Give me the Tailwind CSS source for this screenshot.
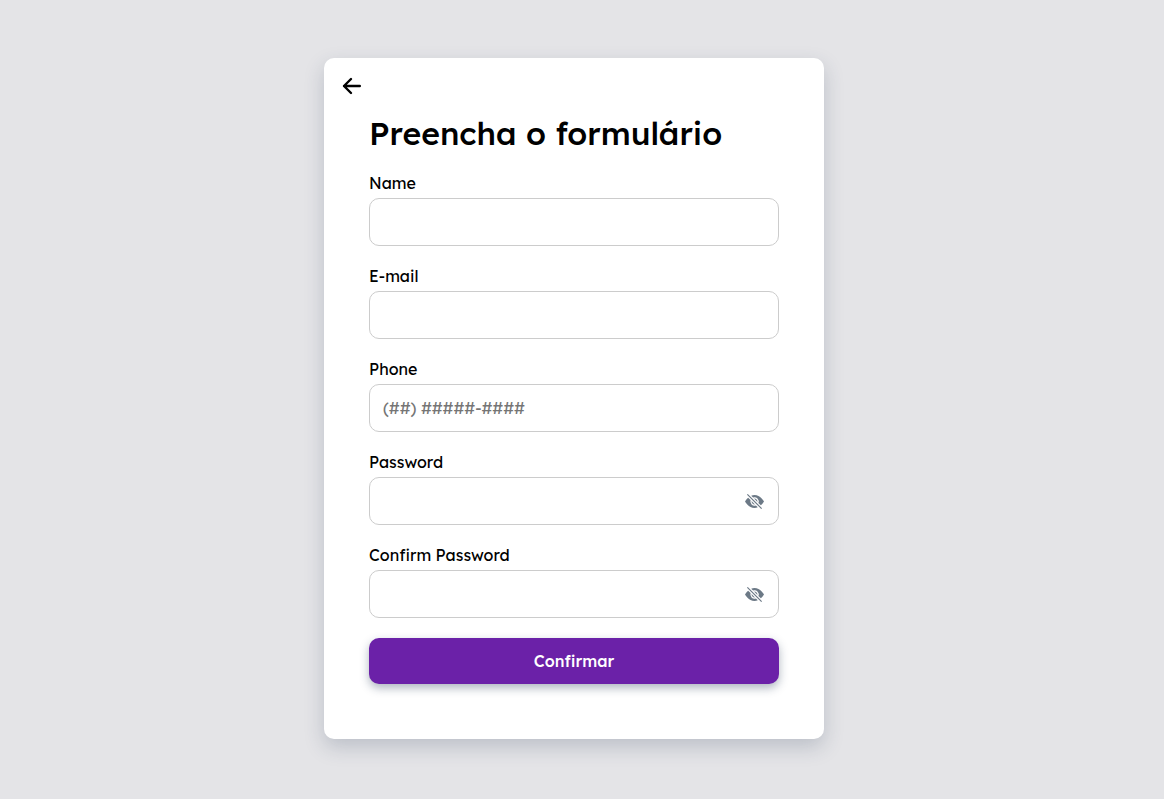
<!DOCTYPE html>
<html lang="pt-BR">
<head>
<meta charset="utf-8">
<meta name="viewport" content="width=device-width, initial-scale=1">
<title>Preencha o formulário</title>
<script src="https://cdn.jsdelivr.net/npm/@tailwindcss/browser@4"></script>
</head>
<body class="flex min-h-screen items-center justify-center bg-[#e4e4e7] pr-4 pb-0.5 font-[Lexend,Inter,sans-serif] text-black">
<main class="w-full max-w-[500px] rounded-[10px] bg-white px-[18px] pt-4 pb-[55px] shadow-[0_8px_20px_0_rgba(45,65,90,0.22)]">
  <button type="button" aria-label="Voltar" class="block">
    <svg class="size-6" viewBox="0 0 24 24" fill="none" stroke="currentColor" stroke-width="2.4" stroke-linecap="round" stroke-linejoin="round"><path d="M17.8 12H2M9 5l-7 7 7 7"/></svg>
  </button>
  <form class="px-[27px] pt-[15px]">
    <h1 class="text-[32px] leading-10 font-medium">Preencha o formulário</h1>
    <div class="mt-[18px] flex flex-col gap-[18px]">
      <div>
        <label for="name" class="mb-[3px] block leading-6">Name</label>
        <input id="name" type="text" class="block h-12 w-full rounded-[10px] border border-[#ccc] px-[13px]">
      </div>
      <div>
        <label for="email" class="mb-[3px] block leading-6">E-mail</label>
        <input id="email" type="email" class="block h-12 w-full rounded-[10px] border border-[#ccc] px-[13px]">
      </div>
      <div>
        <label for="phone" class="mb-[3px] block leading-6">Phone</label>
        <input id="phone" type="tel" placeholder="(##) #####-####" class="block h-12 w-full rounded-[10px] border border-[#ccc] px-[13px] placeholder:text-[#757575]">
      </div>
      <div>
        <label for="password" class="mb-[3px] block leading-6">Password</label>
        <div class="flex h-12 items-center rounded-[10px] border border-[#ccc] pr-3.5 pl-[13px]">
          <input id="password" type="password" class="h-full min-w-0 flex-1 outline-none">
          <button type="button" aria-label="Mostrar senha" class="text-[#6c7986]">
            <svg class="size-[19px]" viewBox="0 0 16 16" fill="currentColor"><path d="m10.79 12.912-1.614-1.615a3.5 3.5 0 0 1-4.474-4.474l-2.06-2.06C.938 6.278 0 8 0 8s3 5.5 8 5.5a7 7 0 0 0 2.79-.588M5.21 3.088A7 7 0 0 1 8 2.5c5 0 8 5.5 8 5.5s-.939 1.721-2.641 3.238l-2.062-2.062a3.5 3.5 0 0 0-4.474-4.474z"/><path d="M5.525 7.646a2.5 2.5 0 0 0 2.829 2.829zm4.95.708-2.829-2.83a2.5 2.5 0 0 1 2.829 2.829zm3.171 6-12-12 .708-.708 12 12z"/></svg>
          </button>
        </div>
      </div>
      <div>
        <label for="confirm" class="mb-[3px] block leading-6">Confirm Password</label>
        <div class="flex h-12 items-center rounded-[10px] border border-[#ccc] pr-3.5 pl-[13px]">
          <input id="confirm" type="password" class="h-full min-w-0 flex-1 outline-none">
          <button type="button" aria-label="Mostrar confirmação da senha" class="text-[#6c7986]">
            <svg class="size-[19px]" viewBox="0 0 16 16" fill="currentColor"><path d="m10.79 12.912-1.614-1.615a3.5 3.5 0 0 1-4.474-4.474l-2.06-2.06C.938 6.278 0 8 0 8s3 5.5 8 5.5a7 7 0 0 0 2.79-.588M5.21 3.088A7 7 0 0 1 8 2.5c5 0 8 5.5 8 5.5s-.939 1.721-2.641 3.238l-2.062-2.062a3.5 3.5 0 0 0-4.474-4.474z"/><path d="M5.525 7.646a2.5 2.5 0 0 0 2.829 2.829zm4.95.708-2.829-2.83a2.5 2.5 0 0 1 2.829 2.829zm3.171 6-12-12 .708-.708 12 12z"/></svg>
          </button>
        </div>
      </div>
    </div>
    <button type="submit" class="mt-5 block h-[46px] w-full rounded-[10px] bg-[#6b21a8] font-medium text-white shadow-[0_4px_10px_0_rgba(30,50,80,0.36)]">Confirmar</button>
  </form>
</main>
</body>
</html>
